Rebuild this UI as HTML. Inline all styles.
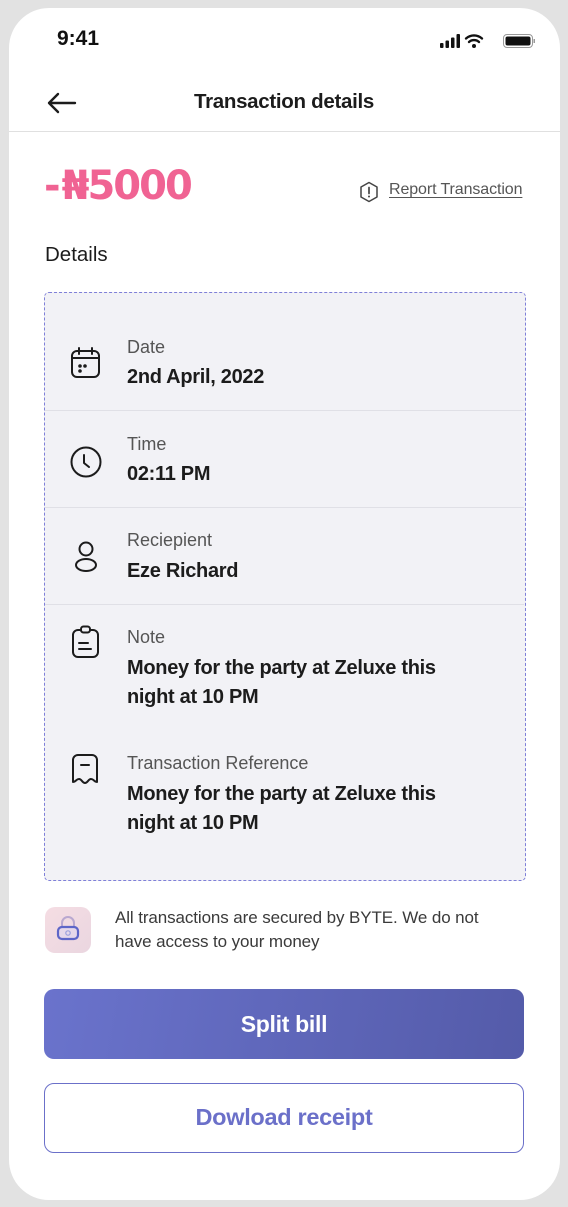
<!DOCTYPE html>
<html><head><meta charset="utf-8"><style>
*{margin:0;padding:0;box-sizing:border-box}
body{width:568px;height:1207px;background:#e2e2e2;font-family:"Liberation Sans",sans-serif;position:relative;overflow:hidden}
.frame{position:absolute;left:9px;top:8px;width:551px;height:1192px;background:#fff;border-radius:40px;overflow:hidden}
.abs{position:absolute}
.lbl{position:absolute;left:127px;font-size:18px;color:#555}
.val{position:absolute;left:127px;font-size:20px;font-weight:bold;color:#1c1c1c;letter-spacing:-0.3px;line-height:29px}
.sep{position:absolute;left:45px;width:479px;height:1px;background:#e0e0e6}
svg.ic{position:absolute;fill:none;stroke:#1c1c1c;stroke-width:2;stroke-linecap:round;stroke-linejoin:round}
</style></head><body>
<div class="frame"></div>
<div class="abs" style="left:57px;top:27px;font-size:21px;font-weight:bold;color:#111">9:41</div>
<svg class="abs" style="left:440px;top:33px" width="96" height="16" viewBox="0 0 96 16">
<rect x="0" y="10" width="3.5" height="5" rx="1" fill="#111"/><rect x="5.5" y="7.5" width="3.5" height="7.5" rx="1" fill="#111"/><rect x="11" y="4.5" width="3.5" height="10.5" rx="1" fill="#111"/><rect x="16.5" y="1" width="3.5" height="14" rx="1" fill="#111"/>
<path d="M26 5.5a12 12 0 0 1 16 0M29 9a7.5 7.5 0 0 1 10 0" stroke="#111" stroke-width="2.4" fill="none" stroke-linecap="round"/><circle cx="34" cy="13" r="2" fill="#111"/>
<rect x="63.5" y="1.5" width="29" height="13" rx="3.5" stroke="#999" stroke-width="1" fill="none"/><rect x="65.5" y="3.5" width="25" height="9" rx="2" fill="#111"/><rect x="93.5" y="6" width="1.5" height="4" fill="#999"/>
</svg>
<svg class="abs" style="left:46px;top:92px" width="32" height="22" viewBox="0 0 32 22"><path d="M29 11H3M12 2L3 11l9 9" stroke="#1c1c1c" stroke-width="2.4" fill="none" stroke-linecap="round" stroke-linejoin="round"/></svg>
<div class="abs" style="left:0;width:568px;top:90px;text-align:center;font-size:20.5px;font-weight:bold;color:#1c1c1c;letter-spacing:-0.3px">Transaction details</div>
<div class="abs" style="left:9px;top:131px;width:551px;height:1px;background:#e0e0e0"></div>
<div class="abs" style="left:44px;top:163px;font-family:'DejaVu Sans',sans-serif;font-size:40px;font-weight:bold;color:#f06393;letter-spacing:-2px"><span style="margin-right:3px">-</span>₦5000</div>
<svg class="abs" style="left:359px;top:181px" width="20" height="22" viewBox="0 0 20 22"><path d="M10 1.5l8 4.5v10l-8 4.5-8-4.5V6z" stroke="#444" stroke-width="1.5" fill="none" stroke-linejoin="round"/><path d="M10 6.5v6" stroke="#444" stroke-width="1.7" stroke-linecap="round"/><circle cx="10" cy="15.5" r="1" fill="#444"/></svg>
<div class="abs" style="left:389px;top:181px;font-size:16px;color:#555;text-decoration:underline;text-underline-offset:3px;letter-spacing:-0.1px">Report Transaction</div>
<div class="abs" style="left:45px;top:243px;font-size:20.5px;color:#1c1c1c">Details</div>
<div class="abs" style="left:44px;top:292px;width:482px;height:589px;background:#f2f2f6;border:1.5px dashed #7f80d8;border-radius:5px"></div>
<div class="sep" style="top:410px"></div><div class="sep" style="top:507px"></div><div class="sep" style="top:604px"></div>
<svg class="ic" style="left:70px;top:346px" width="32" height="34" viewBox="0 0 32 34"><rect x="2" y="5" width="27" height="26" rx="5"/><path d="M9 2v6M22 2v6M2 12h27"/><circle cx="10" cy="20" r=".8" fill="#1c1c1c"/><circle cx="10" cy="25" r=".8" fill="#1c1c1c"/><circle cx="15" cy="20" r=".8" fill="#1c1c1c"/></svg>
<div class="lbl" style="top:337px">Date</div><div class="val" style="top:363px">2nd April, 2022</div>
<svg class="ic" style="left:69px;top:445px" width="34" height="34" viewBox="0 0 34 34"><circle cx="17" cy="17" r="14.5"/><path d="M15 10v8l5 4"/></svg>
<div class="lbl" style="top:434px">Time</div><div class="val" style="top:460px">02:11 PM</div>
<svg class="ic" style="left:73px;top:540px" width="26" height="34" viewBox="0 0 26 34"><circle cx="13" cy="9" r="6.5"/><ellipse cx="13" cy="25" rx="10" ry="6"/></svg>
<div class="lbl" style="top:530px">Reciepient</div><div class="val" style="top:557px">Eze Richard</div>
<svg class="ic" style="left:70px;top:625px" width="32" height="34" viewBox="0 0 32 34"><rect x="3" y="5" width="25" height="27" rx="5"/><rect x="11" y="1.5" width="9" height="6" rx="2.5" fill="#f2f2f6"/><path d="M9 18h9M9 24h12"/></svg>
<div class="lbl" style="top:627px">Note</div><div class="val" style="top:654px">Money for the party at Zeluxe this<br>night at 10 PM</div>
<svg class="ic" style="left:70px;top:752px" width="32" height="34" viewBox="0 0 32 34"><path d="M3 30V8a5 5 0 0 1 5-5h14a5 5 0 0 1 5 5v22c-3 0-3-3-6-3s-3 4-6 4-3-4-6-4-3 3-6 3z"/><path d="M11 13h8"/></svg>
<div class="lbl" style="top:753px">Transaction Reference</div><div class="val" style="top:780px">Money for the party at Zeluxe this<br>night at 10 PM</div>
<div class="abs" style="left:45px;top:907px;width:46px;height:46px;border-radius:10px;background:linear-gradient(135deg,#f5dde3,#ead6e0)"></div>
<svg class="abs" style="left:54px;top:914px" width="28" height="30" viewBox="0 0 28 30"><path d="M8 13V9a6 6 0 0 1 12 0v4" stroke="#b9a8d0" stroke-width="2" fill="none"/><rect x="4" y="13" width="20" height="12" rx="4" stroke="#5e66c8" stroke-width="2.2" fill="#e6d8ea"/><circle cx="14" cy="19" r="2.2" stroke="#9aa0dd" stroke-width="1.2" fill="none"/></svg>
<div class="abs" style="left:115px;top:906px;font-size:17px;color:#3a3a3a;line-height:24px;letter-spacing:-0.1px">All transactions are secured by BYTE. We do not<br>have access to your money</div>
<div class="abs" style="left:44px;top:989px;width:480px;height:70px;border-radius:10px;background:linear-gradient(100deg,#6a73cc,#545ba9);color:#fff;font-size:23px;font-weight:bold;text-align:center;line-height:70px;letter-spacing:-0.3px">Split bill</div>
<div class="abs" style="left:44px;top:1083px;width:480px;height:70px;border-radius:10px;border:1.5px solid #6b70c9;color:#6b70c9;font-size:23.5px;font-weight:bold;text-align:center;line-height:67px;letter-spacing:-0.3px">Dowload receipt</div>
</body></html>
